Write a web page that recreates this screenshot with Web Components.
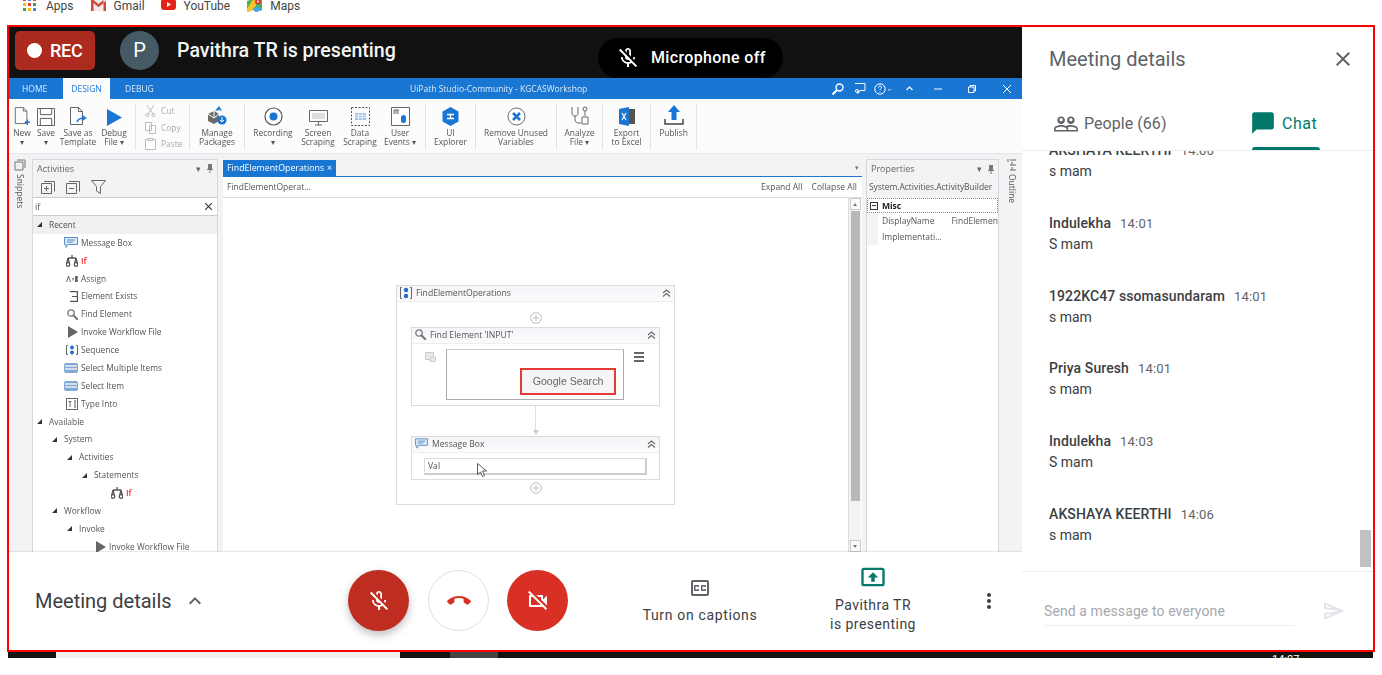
<!DOCTYPE html>
<html lang="en">
<head>
<meta charset="utf-8">
<title>Meet</title>
<style>
html, body { margin: 0; padding: 0; background: #fff; overflow: hidden; }
body { font-family: Roboto, "Liberation Sans", sans-serif; width: 1382px; height: 675px; }
</style>
</head>
<body>
<bookmark-bar></bookmark-bar>
<meet-frame></meet-frame>
<task-strip></task-strip>

<script>
const define = (name, html, init) => customElements.define(name, class extends HTMLElement {
  constructor() {
    super();
    this.attachShadow({ mode: 'open' });
    this.shadowRoot.innerHTML = html;
    if (init) init(this);
  }
});

const mi = (d, size, fill) =>
  `<svg width="${size}" height="${size}" viewBox="0 0 24 24" fill="${fill}"><path d="${d}"/></svg>`;

const ICON = {
  micOff: 'M10.8 4.9c0-.66.54-1.2 1.2-1.2s1.2.54 1.2 1.2l-.01 3.91L15 10.6V5c0-1.66-1.34-3-3-3-1.54 0-2.79 1.16-2.96 2.65l1.76 1.76V4.9zM19 11h-1.7c0 .58-.1 1.13-.27 1.64l1.27 1.27c.44-.88.7-1.87.7-2.91zM4.41 2.86L3 4.27l6 6V11c0 1.66 1.34 3 3 3 .23 0 .44-.03.65-.08l1.66 1.66c-.71.33-1.5.52-2.31.52-2.76 0-5.3-2.1-5.3-5.1H5c0 3.41 2.72 6.23 6 6.72V21h2v-3.28c.91-.13 1.77-.4 2.55-.82l4.18 4.18 1.41-1.41L4.41 2.86z',
  callEnd: 'M12 9c-1.6 0-3.15.25-4.6.72v3.1c0 .39-.23.74-.56.9-.98.49-1.87 1.12-2.66 1.85-.18.18-.43.28-.7.28-.28 0-.53-.11-.71-.29L.29 13.08c-.18-.17-.29-.42-.29-.7 0-.28.11-.53.29-.71C3.34 8.78 7.46 7 12 7s8.66 1.78 11.71 4.67c.18.18.29.43.29.71 0 .28-.11.53-.29.71l-2.48 2.48c-.18.18-.43.29-.71.29-.27 0-.52-.11-.7-.28-.79-.74-1.69-1.36-2.67-1.85-.33-.16-.56-.5-.56-.9v-3.1C15.15 9.25 13.6 9 12 9z',
  camOff: 'M9.56 8l-2-2-4.15-4.14L2 3.27 4.73 6H4c-.55 0-1 .45-1 1v10c0 .55.45 1 1 1h12c.21 0 .39-.08.55-.18L19.73 21l1.41-1.41-8.86-8.86L9.56 8zM5 16V8h1.73l8 8H5zm10-8v2.61l6 6V6.5l-4 4V7c0-.55-.45-1-1-1h-5.61l2 2H15z',
  close: 'M19 6.41L17.59 5 12 10.59 6.41 5 5 6.41 10.59 12 5 17.59 6.41 19 12 13.41 17.59 19 19 17.59 13.41 12z',
  people: 'M16.5 13c-1.2 0-3.07.34-4.5 1-1.43-.67-3.3-1-4.5-1C5.33 13 1 14.08 1 16.25V19h22v-2.75c0-2.17-4.33-3.25-6.5-3.25zm-4 4.5h-10v-1.25c0-.54 2.56-1.75 5-1.75s5 1.21 5 1.75v1.25zm9 0H14v-1.25c0-.46-.2-.86-.52-1.22.88-.3 1.96-.53 3.02-.53 2.44 0 5 1.21 5 1.75v1.25zM7.5 12c1.93 0 3.5-1.57 3.5-3.5S9.43 5 7.5 5 4 6.57 4 8.5 5.57 12 7.5 12zm0-5.5c.83 0 1.5.67 1.5 1.5s-.67 1.5-1.5 1.5S6 8.83 6 8s.67-1.5 1.5-1.5zm9 5.5c1.93 0 3.5-1.57 3.5-3.5S18.43 5 16.5 5 13 6.57 13 8.5s1.57 3.5 3.5 3.5zm0-5.5c.83 0 1.5.67 1.5 1.5s-.67 1.5-1.5 1.5S15 8.83 15 8s.67-1.5 1.5-1.5z',
  chat: 'M20 2H4c-1.1 0-2 .9-2 2v18l4-4h14c1.1 0 2-.9 2-2V4c0-1.1-.9-2-2-2z',
  send: 'M4.01 6.03l7.51 3.22-7.52-1 .01-2.22m7.5 8.72L4 17.97v-2.22l7.51-1M2.01 3L2 10l15 2-15 2 .01 7L23 12 2.01 3z',
  less: 'M12 8l-6 6 1.41 1.41L12 10.83l4.59 4.58L18 14z',
  cc: 'M19 4H5c-1.11 0-2 .9-2 2v12c0 1.1.89 2 2 2h14c1.1 0 2-.9 2-2V6c0-1.1-.9-2-2-2zm0 14H5V6h14v12zM7 15h3c.55 0 1-.45 1-1v-1H9.5v.5h-2v-3h2v.5H11v-1c0-.55-.45-1-1-1H7c-.55 0-1 .45-1 1v4c0 .55.45 1 1 1zm7 0h3c.55 0 1-.45 1-1v-1h-1.5v.5h-2v-3h2v.5H18v-1c0-.55-.45-1-1-1h-3c-.55 0-1 .45-1 1v4c0 .55.45 1 1 1z',
  present: 'M20 4H4c-1.1 0-2 .9-2 2v12c0 1.1.9 2 2 2h16c1.1 0 2-.9 2-2V6c0-1.1-.9-2-2-2zm0 14H4V6h16v12zM12 8l-4.5 4.5H10.5V16h3v-3.5h3z',
  more: 'M12 8c1.1 0 2-.9 2-2s-.9-2-2-2-2 .9-2 2 .9 2 2 2zm0 2c-1.1 0-2 .9-2 2s.9 2 2 2 2-.9 2-2-.9-2-2-2zm0 6c-1.1 0-2 .9-2 2s.9 2 2 2 2-.9 2-2-.9-2-2-2z',
};

/* ---------- chrome bookmarks ---------- */
define('bookmark-bar', `
<style>
:host { display: flex; height: 25px; padding-left: 23px; box-sizing: border-box; overflow: hidden;
  font: 12px/12px Roboto, sans-serif; color: #444; }
.b { display: flex; gap: 8px; height: 12px; align-items: flex-start; }
svg { display: block; margin-top: -2px; }
</style>
<div class="b" style="gap:10px;margin-right:17px"><svg width="13" height="13" viewBox="0 0 13 13">
  <rect x="0" y="0" width="3" height="3" fill="#ea4335"/><rect x="5" y="0" width="3" height="3" fill="#4285f4"/><rect x="10" y="0" width="3" height="3" fill="#ea4335"/>
  <rect x="0" y="5" width="3" height="3" fill="#fbbc05"/><rect x="5" y="5" width="3" height="3" fill="#ea4335"/><rect x="10" y="5" width="3" height="3" fill="#34a853"/>
  <rect x="0" y="10" width="3" height="3" fill="#34a853"/><rect x="5" y="10" width="3" height="3" fill="#fbbc05"/><rect x="10" y="10" width="3" height="3" fill="#4285f4"/></svg><span>Apps</span></div>
<div class="b" style="margin-right:16px"><svg width="15" height="13" viewBox="0 0 15 13"><path d="M0 1h15v12H0z" fill="#eee"/><path d="M0 1l7.500 6L15 1v3L7.500 10 0 4z" fill="#ddd"/><path d="M0 0l2.500 2v11H0zM15 0l-2.500 2v11H15zM0 0l7.500 6L15 0v3L7.500 9 0 3z" fill="#d44638"/></svg><span>Gmail</span></div>
<div class="b" style="margin-right:17px"><svg width="15" height="13" viewBox="0 0 15 13"><rect y="1" width="15" height="11" rx="3" fill="#e62117"/><path d="M6 4l4 2.500L6 9z" fill="#fff"/></svg><span>YouTube</span></div>
<div class="b"><svg width="15" height="14" viewBox="0 0 15 14"><path d="M0 3l6-2 3 2 6-2v11l-6 2-3-2-6 2z" fill="#4caf50"/><path d="M6 1l3 2v5L4 13l-4 1v-3z" fill="#fbc02d"/><path d="M9 8l6 4-6 2-3-2z" fill="#42a5f5"/><circle cx="11" cy="3.500" r="3" fill="#e53935"/><circle cx="11" cy="3.500" r="1" fill="#fff"/></svg><span>Maps</span></div>
`);

/* ---------- outer red frame ---------- */
define('meet-frame', `
<style>
:host { display: flex; margin-left: 7px; width: 1368px; height: 627px; box-sizing: border-box;
  border: 2px solid #f00; background: #fff; }
.main { width: 1013px; flex: none; display: flex; flex-direction: column; position: relative; }
</style>
<div class="main">
  <meet-topbar></meet-topbar>
  <studio-screen></studio-screen>
  <meet-controls></meet-controls>
</div>
<chat-panel></chat-panel>
`);

define('meet-topbar', `
<style>
:host { display: flex; align-items: center; height: 51px; flex: none; background: #111; color: #fff;
  position: relative; padding: 0 0 4px 6px; box-sizing: border-box; }
.rec { width: 80px; height: 39px; border-radius: 5px; background: #ad2a1f; display: flex; align-items: center;
  box-sizing: border-box; padding-left: 12px; gap: 8px; font: 500 18px/39px Roboto, sans-serif; letter-spacing: -.3px; }
.rec i { width: 15px; height: 15px; border-radius: 50%; background: #fff; }
.av { width: 39px; height: 39px; border-radius: 50%; background: #455a64; margin-left: 25px; text-align: center;
  font: 400 20px/39px Roboto, sans-serif; }
.who { margin-left: 18px; font: 500 19.600px/24px Roboto, sans-serif; color: #f4f4f4; }
.toast { position: absolute; left: 589px; top: 11px; width: 185px; height: 40px; border-radius: 20px; background: #000;
  display: flex; align-items: center; box-sizing: border-box; padding-left: 18px; gap: 11px;
  font: 500 16px/20px Roboto, sans-serif; letter-spacing: .35px; }
svg { display: block; }
</style>
<div class="rec"><i></i>REC</div>
<div class="av">P</div>
<div class="who">Pavithra TR is presenting</div>
<div class="toast">${mi(ICON.micOff, 24, '#fff')}<span>Microphone off</span></div>
`);

/* ---------- shared screen: the studio window ---------- */
define('ribbon-item', `
<style>
:host { display: flex; flex-direction: column; align-items: center; flex: none; height: 46px;
  font: 8.400px/9.400px "Open Sans", sans-serif; color: #555; text-align: center; }
.i { height: 22px; display: flex; align-items: flex-end; justify-content: center; flex: none; }
.l { white-space: nowrap; margin-top: 2px; }
</style>
<div class="i"><slot name="icon"></slot></div>
<div class="l"><slot></slot></div>
`, el => { el.style.width = el.getAttribute('w') + 'px'; });

define('studio-ribbon', `
<style>
:host { display: flex; height: 54px; flex: none; background: #fdfcfd; padding: 5px 0 0 2px; box-sizing: border-box; }
.sep { width: 1px; height: 46px; background: #e4e2e6; flex: none; }
.clip { width: 53px; flex: none; box-sizing: border-box; padding: 0 0 0 9px; margin-top: -1px; font: 8.400px/16.500px "Open Sans", sans-serif; color: #aaa; }
.clip div { display: flex; align-items: center; gap: 5px; height: 16.500px; }
svg { display: block; }
</style>
<ribbon-item w="22"><svg slot="icon" width="16" height="20" viewBox="0 0 18 22" fill="none" stroke="#666"><path d="M1.500 1.500h9l4 4v14h-13z"/><path d="M10.500 1.500v4h4"/><path d="M12 18h6M15 15v6" stroke="#1976d2" stroke-width="1.500"/></svg>New<br>▾</ribbon-item>
<ribbon-item w="26"><svg slot="icon" width="18" height="18" viewBox="0 0 19 19" fill="#fff" stroke="#555"><path d="M.5.5h18v18H.5z"/><path d="M3.500 1v6h12V1M3.500 18v-7h12v7"/></svg>Save<br>▾</ribbon-item>
<ribbon-item w="38"><svg slot="icon" width="18" height="20" viewBox="0 0 18 20" fill="none" stroke="#666"><path d="M1.500 1.500h8l4 4v13h-12z"/><path d="M9.500 1.500v4h4"/><path d="M8 16c1-3 3-4 7-4M13 9.500l3.500 2.500-3.500 2.500" stroke="#1976d2" stroke-width="1.500"/></svg>Save as<br>Template</ribbon-item>
<ribbon-item w="34"><svg slot="icon" width="15" height="17" viewBox="0 0 15 17"><path d="M0 0l15 8.500L0 17z" fill="#1976d2"/></svg>Debug<br>File ▾</ribbon-item>
<div class="sep" style="margin-left:4px"></div>
<div class="clip">
  <div><svg width="11" height="12" viewBox="0 0 11 12" fill="none" stroke="#bbb"><path d="M2 0l6 9M9 0L3 9"/><circle cx="2.500" cy="10" r="1.500"/><circle cx="8.500" cy="10" r="1.500"/></svg>Cut</div>
  <div><svg width="11" height="12" viewBox="0 0 11 12" fill="#fff" stroke="#bbb"><path d="M.5.5h6v8h-6zM4.500 3.500h6v8h-6z"/></svg>Copy</div>
  <div><svg width="11" height="12" viewBox="0 0 11 12" fill="#fff" stroke="#bbb"><path d="M.5 1.500h10v10H.5z"/><path d="M3 .5h5v2H3z"/></svg>Paste</div>
</div>
<div class="sep"></div>
<ribbon-item w="54"><svg slot="icon" width="20" height="21" viewBox="0 0 20 21"><path d="M1 9l6-3 5 3v7l-5 3-6-3z" fill="#6b6b6b"/><path d="M7 6v7M1 9l6 4 5-4" stroke="#fff" fill="none"/><path d="M8 6l4-5 3 5-3-1z" fill="#1976d2"/><circle cx="15" cy="15" r="4.500" fill="#1976d2"/><path d="M15 12v5M13 15l2 2 2-2" stroke="#fff" fill="none"/></svg>Manage<br>Packages</ribbon-item>
<div class="sep"></div>
<ribbon-item w="56"><svg slot="icon" width="19" height="19" viewBox="0 0 19 19"><circle cx="9.500" cy="9.500" r="8.500" fill="#fff" stroke="#555" stroke-width="1.200"/><circle cx="9.500" cy="9.500" r="4" fill="#1976d2"/></svg>Recording<br>▾</ribbon-item>
<ribbon-item w="34"><svg slot="icon" width="19" height="16" viewBox="0 0 19 16" fill="none" stroke="#666"><path d="M.5.5h18v11H.5z"/><path d="M3 3h13v6H3z" fill="#ddd" stroke="none"/><path d="M6 15h7M9.500 12v3"/></svg>Screen<br>Scraping</ribbon-item>
<ribbon-item w="50"><svg slot="icon" width="19" height="19" viewBox="0 0 19 19" fill="none"><path d="M.5.5h18v18H.5z" stroke="#555" stroke-dasharray="2 1.500"/><path d="M4 6h11v7H4z" fill="#9ec3ea"/><path d="M4 8.300h11M4 10.600h11M7.500 6v7M11.200 6v7" stroke="#fff" stroke-width=".7"/></svg>Data<br>Scraping</ribbon-item>
<ribbon-item w="30"><svg slot="icon" width="19" height="19" viewBox="0 0 19 19"><path d="M.5.5h18v18H.5z" fill="#fff" stroke="#666"/><path d="M3 3v4M5 3v4M7 3v4M3 3h5" stroke="#666" fill="none"/><rect x="10" y="8" width="5" height="8" rx="2.500" fill="#1976d2"/></svg>User<br>Events ▾</ribbon-item>
<div class="sep" style="margin-left:10px"></div>
<ribbon-item w="49"><svg slot="icon" width="17" height="19" viewBox="0 0 17 19"><path d="M8.500 0l8 4.500v10l-8 4.500-8-4.500v-10z" fill="#1976d2"/><path d="M5 7.500h7M5 11.500h7M8.500 7.500v4" stroke="#fff" fill="none" stroke-width="1.300"/></svg>UI<br>Explorer</ribbon-item>
<div class="sep"></div>
<ribbon-item w="80"><svg slot="icon" width="19" height="19" viewBox="0 0 19 19"><circle cx="9.500" cy="9.500" r="8.500" fill="#fff" stroke="#666"/><path d="M6 6l7 7M13 6l-7 7" stroke="#1976d2" stroke-width="2.500"/></svg>Remove Unused<br>Variables</ribbon-item>
<div class="sep"></div>
<ribbon-item w="45"><svg slot="icon" width="18" height="20" viewBox="0 0 18 20" fill="none" stroke="#666"><path d="M1 1v6c0 2 1 3 3 3s3-1 3-3V1M4 10v4c0 2 2 3 4 3h2"/><circle cx="14" cy="3" r="2"/><path d="M14 5v5"/><path d="M11 11h6v7h-6z"/></svg>Analyze<br>File ▾</ribbon-item>
<div class="sep"></div>
<ribbon-item w="47"><svg slot="icon" width="16" height="19" viewBox="0 0 16 19"><path d="M8 2h8v15H8z" fill="#555"/><path d="M0 2l10-2v19L0 17z" fill="#1976d2"/><path d="M3 6l4 7M7 6l-4 7" stroke="#fff" stroke-width="1.200"/></svg>Export<br>to Excel</ribbon-item>
<div class="sep"></div>
<ribbon-item w="45"><svg slot="icon" width="20" height="21" viewBox="0 0 20 21"><path d="M10 0l6 7h-3.500v8h-5V7H4z" fill="#1976d2"/><path d="M1 14v5h18v-5" stroke="#444" fill="none" stroke-width="1.500"/></svg>Publish<br>&nbsp;</ribbon-item>
<div class="sep"></div>
`);

define('tree-row', `
<style>
:host { display: flex; align-items: center; height: 17.890px; font: 8.400px/12px "Open Sans", sans-serif; color: #555; white-space: nowrap; }
:host([head]) { background: #f0eff1; }
.a { width: 9px; flex: none; display: flex; }
.a i { display: block; width: 0; height: 0; border-style: solid; border-width: 0 0 5px 5px; border-color: transparent transparent #333 transparent; }
.ic { display: flex; justify-content: flex-end; margin-right: 3px; }
</style>
<span class="a"><i></i></span><span class="ic"><slot name="icon"></slot></span><slot></slot>
`, el => {
  el.style.paddingLeft = el.getAttribute('x') + 'px';
  if (el.hasAttribute('leaf')) {
    el.shadowRoot.querySelector('.a').style.display = 'none';
    el.shadowRoot.querySelector('.ic').style.width = el.getAttribute('leaf') + 'px';
  }
  if (el.hasAttribute('red')) { el.style.color = '#f02a2a'; el.style.fontWeight = '600'; }
});

const ifIcon = `<svg slot="icon" width="12" height="12" viewBox="0 0 12 12" fill="none" stroke="#555" stroke-width="1.300"><path d="M6 0v3M2 3h8M2 3L.8 8M2 3l1.300 5M10 3L8.800 8M10 3l1.300 5"/><circle cx="2" cy="9.500" r="1.800"/><circle cx="10" cy="9.500" r="1.800"/></svg>`;
const itemsIcon = `<svg slot="icon" width="14" height="10" viewBox="0 0 14 10"><rect width="14" height="10" rx="2" fill="#7fa9d6"/><path d="M1 3h12M1 6h12" stroke="#eee" stroke-width="1.500"/></svg>`;
const playIcon = `<svg slot="icon" width="10" height="12" viewBox="0 0 10 12"><path d="M0 0l10 6-10 6z" fill="#666"/></svg>`;

define('activities-panel', `
<style>
:host { display: flex; flex-direction: column; width: 186px; flex: none; margin: 5px 0 0 1px; background: #f3f2f5;
  border: 1px solid #d9d8dc; border-bottom: 0; box-sizing: border-box; min-height: 0; }
.h { height: 17px; display: flex; align-items: center; padding: 0 4px; font: 9px/12px "Open Sans", sans-serif; color: #666; gap: 6px; flex: none; }
.dots { flex: 1; height: 4px; background-image: radial-gradient(#bbb 35%, transparent 40%); background-size: 2px 2px; }
.tools { height: 20px; display: flex; align-items: center; gap: 11px; padding-left: 8px; flex: none; }
.search { height: 17px; background: #fff; display: flex; align-items: center; justify-content: space-between;
  padding: 0 5px 0 2px; font: 9px/12px "Open Sans", sans-serif; color: #555; flex: none; border-top: 1px solid #ccc; border-bottom: 1px solid #ccc; }
.list { background: #fff; flex: 1; overflow: hidden; }
svg { display: block; }
</style>
<div class="h"><span>Activities</span><span class="dots"></span><span>▾</span><svg width="6" height="9" viewBox="0 0 6 9" fill="#777"><path d="M1 0h4v5H1zM0 5h6v1H0zM2.500 6h1v3h-1z"/></svg></div>
<div class="tools">
  <svg width="14" height="13" viewBox="0 0 14 13" fill="none" stroke="#666"><path d="M.5 2.500h10v10H.5zM3 .5h10.500v10"/><path d="M3 7.500h5M5.500 5v5"/></svg>
  <svg width="14" height="13" viewBox="0 0 14 13" fill="none" stroke="#666"><path d="M.5 2.500h10v10H.5zM3 .5h10.500v10"/><path d="M3 7.500h5"/></svg>
  <svg width="15" height="14" viewBox="0 0 15 14" fill="none" stroke="#666"><path d="M.5.5h14l-5 6v7l-4-2.500V6.500z"/></svg>
</div>
<div class="search"><span>if</span><svg width="7" height="7" viewBox="0 0 7 7" stroke="#333" stroke-width="1.100"><path d="M0 0l7 7M7 0L0 7"/></svg></div>
<div class="list">
  <tree-row x="4" head>Recent</tree-row>
  <tree-row x="30" leaf="15"><svg slot="icon" width="14" height="11" viewBox="0 0 14 11"><path d="M.5.5h13v7H4l-2 3v-3H.5z" fill="#dce9f6" stroke="#5b8fc7"/><path d="M3 3h8M3 5h6" stroke="#5b8fc7"/></svg>Message Box</tree-row>
  <tree-row x="30" leaf="15" red>${ifIcon}If</tree-row>
  <tree-row x="30" leaf="15"><svg slot="icon" width="12" height="6" viewBox="0 0 12 6" fill="#666"><path d="M0 6l2-6h1l2 6H4L2.500 1.500 1 6zM6 2h2v.8H6zM6 3.500h2v.8H6zM9 0h2c1.300 0 1.300 2.600 0 3 1.500.3 1.500 3-.2 3H9z"/></svg>Assign</tree-row>
  <tree-row x="30" leaf="15"><svg slot="icon" width="8" height="11" viewBox="0 0 8 11" fill="none" stroke="#555" stroke-width="1.200"><path d="M0 .6h7.400v9.800H0M2 5.500h5.400"/></svg>Element Exists</tree-row>
  <tree-row x="30" leaf="15"><svg slot="icon" width="11" height="11" viewBox="0 0 11 11" fill="none" stroke="#777" stroke-width="1.300"><circle cx="4" cy="4" r="3.200"/><path d="M6.500 6.500L11 11" stroke-width="2"/></svg>Find Element</tree-row>
  <tree-row x="30" leaf="15">${playIcon}Invoke Workflow File</tree-row>
  <tree-row x="30" leaf="15"><svg slot="icon" width="12" height="10" viewBox="0 0 12 10"><path d="M2 .5H.5v9H2M10 .5h1.500v9H10" fill="none" stroke="#666"/><circle cx="6" cy="2.500" r="2" fill="#1f6fc4"/><circle cx="6" cy="7.500" r="2" fill="#1f6fc4"/></svg>Sequence</tree-row>
  <tree-row x="30" leaf="15">${itemsIcon}Select Multiple Items</tree-row>
  <tree-row x="30" leaf="15">${itemsIcon}Select Item</tree-row>
  <tree-row x="30" leaf="15"><svg slot="icon" width="12" height="12" viewBox="0 0 12 12" fill="none" stroke="#666"><path d="M.5.5h11v11H.5z"/><path d="M2.500 3.500h3M4 3.500V9M8 3h2M9 3v6M8 9h2"/></svg>Type Into</tree-row>
  <tree-row x="4">Available</tree-row>
  <tree-row x="19">System</tree-row>
  <tree-row x="34">Activities</tree-row>
  <tree-row x="49">Statements</tree-row>
  <tree-row x="75" leaf="15" red>${ifIcon}If</tree-row>
  <tree-row x="19">Workflow</tree-row>
  <tree-row x="34">Invoke</tree-row>
  <tree-row x="63" leaf="10">${playIcon}Invoke Workflow File</tree-row>
</div>
`);

define('wf-card', `
<style>
:host { display: block; background: #fff; border: 1px solid #dcdcdf; box-sizing: border-box; }
.h { height: 16px; box-sizing: border-box; display: flex; align-items: center; gap: 4px; padding: 0 3px 2px; background: linear-gradient(#f6f4f8, #fbfafc);
  font: 8.600px/12px "Open Sans", sans-serif; color: #555; border-bottom: 1px solid #eee; }
.t { flex: 1; }
svg { display: block; }
</style>
<div class="h"><slot name="icon"></slot><span class="t"></span><svg width="9" height="8" viewBox="0 0 9 8" fill="none" stroke="#666" stroke-width="1.100"><path d="M1 4l3.500-3L8 4M1 7.500l3.500-3 3.500 3"/></svg></div>
<slot></slot>
`, el => { el.shadowRoot.querySelector('.t').textContent = el.getAttribute('title'); el.removeAttribute('title'); });

const plusSign = `<svg width="12" height="12" viewBox="0 0 12 12" fill="#fff" stroke="#bbb"><circle cx="6" cy="6" r="5.300"/><path d="M3 6h6M6 3v6"/></svg>`;

define('workflow-designer', `
<style>
:host { display: flex; flex-direction: column; flex: none; width: 639px; margin: 6px 0 0 5px; min-height: 0; }
.tabs { height: 16px; flex: none; display: flex; align-items: stretch; justify-content: space-between; border-bottom: 1px solid #1976d2; }
.tab { width: 113px; background: #1976d2; color: #fff; display: flex; align-items: center; justify-content: space-between;
  padding: 0 4px; box-sizing: border-box; font: 8.800px/12px "Open Sans", sans-serif; }
.arrow { font-size: 7px; color: #777; padding-right: 3px; line-height: 16px; }
.crumbs { height: 21px; flex: none; background: #fff; border-bottom: 1px solid #ddd; display: flex; align-items: center; justify-content: space-between;
  padding: 0 5px 0 4px; box-sizing: border-box; font: 8.500px/12px "Open Sans", sans-serif; color: #555; }
.crumbs b { font-weight: 400; margin-left: 7px; }
.body { flex: 1; display: flex; background: #fff; min-height: 0; overflow: hidden; }
.canvas { flex: 1; display: flex; justify-content: center; align-items: flex-start; padding-top: 87px; box-sizing: border-box; position: relative; }
.seq { width: 279px; height: 220px; flex: none; }
.pad { padding: 10px 14px 0; display: flex; flex-direction: column; align-items: center; }
.pad wf-card { width: 100%; }
.find { height: 79px; }
.fbody { display: flex; padding: 5px 0 0 13px; height: 52px; box-sizing: content-box; }
.doc { width: 11px; height: 10px; margin: 3px 10px 0 0; flex: none; }
.shot { width: 178px; height: 51px; border: 1px solid #aaa; border-top-color: #ccc; box-sizing: border-box; display: flex; justify-content: flex-end; padding: 18px 7px 0 0; flex: none; }
.gs { width: 96px; height: 27px; border: 2px solid #e53935; box-sizing: border-box; text-align: center; font: 10.600px/23px "Liberation Sans", sans-serif; color: #666; background: #f4f4f4; }
.ham { width: 10px; height: 10px; margin: 3px 0 0 10px; background: linear-gradient(#666 2px, transparent 2px, transparent 4px, #666 4px, #666 6px, transparent 6px, transparent 8px, #666 8px); }
.line { width: 1px; height: 24px; background: #ddd; }
.tip { width: 0; height: 0; border: 3px solid transparent; border-top: 5px solid #ccc; border-bottom: 0; margin-bottom: 1px; }
.msg { height: 44px; }
.mbody { padding: 5px 12px 0; }
.inp { height: 17px; border: 1px solid #ddd; border-right: 2px solid #ccc; border-bottom: 2px solid #ccc; box-sizing: border-box; font: 8.600px/15px "Open Sans", sans-serif; color: #555; padding-left: 3px; }
.cursor { position: absolute; left: 254px; top: 265px; }
.sb { width: 13px; flex: none; background: #f3f3f3; border-left: 1px solid #ddd; box-sizing: border-box; display: flex; flex-direction: column; align-items: center; margin-right: 1px; }
.btn { width: 11px; height: 12px; background: #fbfbfb; border: 1px solid #ccc; box-sizing: border-box; flex: none; display: flex; align-items: center; justify-content: center; }
.btn i { width: 0; height: 0; border: 2.500px solid transparent; border-bottom: 3px solid #777; border-top: 0; }
.thumb { width: 9px; height: 290px; background: #b8b8b8; margin-top: 1px; flex: none; }
.end { margin-top: auto; }
.end i { border-top: 3px solid #777; border-bottom: 0; }
svg { display: block; }
</style>
<div class="tabs"><div class="tab"><span>FindElementOperations</span><span>×</span></div><span class="arrow">▾</span></div>
<div class="crumbs"><span>FindElementOperat...</span><span>Expand All <b>Collapse All</b></span></div>
<div class="body">
  <div class="canvas">
    <wf-card class="seq" title="FindElementOperations">
      <svg slot="icon" width="12" height="12" viewBox="0 0 12 12"><path d="M2 .5H.5v11H2M10 .5h1.500v11H10" fill="none" stroke="#666"/><circle cx="6" cy="3" r="2.200" fill="#1f6fc4"/><circle cx="6" cy="9" r="2.200" fill="#1f6fc4"/></svg>
      <div class="pad">
        ${plusSign}
        <wf-card class="find" title="Find Element 'INPUT'" style="margin-top:3px">
          <svg slot="icon" width="11" height="11" viewBox="0 0 11 11" fill="none" stroke="#777" stroke-width="1.300"><circle cx="4" cy="4" r="3.200"/><path d="M6.500 6.500L11 11" stroke-width="2"/></svg>
          <div class="fbody">
            <svg class="doc" viewBox="0 0 11 10" fill="#e9e9ec" stroke="#ccc"><path d="M.5.5h8v7h-8z"/><path d="M5 5h5.500v4.500H5z"/></svg>
            <div class="shot"><div class="gs">Google Search</div></div>
            <div class="ham"></div>
          </div>
        </wf-card>
        <div class="line"></div><div class="tip"></div>
        <wf-card class="msg" title="Message Box">
          <svg slot="icon" width="13" height="11" viewBox="0 0 14 11"><path d="M.5.5h13v7H4l-2 3v-3H.5z" fill="#dce9f6" stroke="#5b8fc7"/><path d="M3 3h8M3 5h6" stroke="#5b8fc7"/></svg>
          <div class="mbody"><div class="inp">Val</div></div>
        </wf-card>
        <div style="margin-top:2px">${plusSign}</div>
      </div>
    </wf-card>
    <svg class="cursor" width="10" height="15" viewBox="0 0 10 15"><path d="M.5.5v11l3-2.500 2 4.500 2-1-2-4.500h4z" fill="#fff" stroke="#333" stroke-width=".8"/></svg>
  </div>
  <div class="sb"><div class="btn"><i></i></div><div class="thumb"></div><div class="btn end"><i></i></div></div>
</div>
`);

define('properties-panel', `
<style>
:host { display: flex; flex-direction: column; width: 133px; flex: none; margin: 5px 0 0 4px; background: #fff; box-sizing: border-box;
  border: 1px solid #d9d8dc; border-bottom: 0; font: 8.500px/12px "Open Sans", sans-serif; color: #555; }
.h { height: 18px; flex: none; background: #f3f2f5; display: flex; align-items: center; padding: 0 4px; gap: 6px; font-size: 9px; color: #666; }
.dots { flex: 1; height: 4px; background-image: radial-gradient(#bbb 35%, transparent 40%); background-size: 2px 2px; }
.s { height: 20px; flex: none; background: #f3f2f5; display: flex; align-items: center; padding: 0 0 2px 2px; box-sizing: border-box; white-space: nowrap; overflow: hidden; letter-spacing: -.05px; }
.m { height: 15px; display: flex; align-items: center; gap: 4px; border: 1px dotted #888; box-sizing: border-box; color: #222; font-weight: 700; padding-left: 2px; flex: none; }
.m i { width: 6px; height: 6px; border: 1px solid #333; display: block; background: linear-gradient(#333,#333) center/4px 1px no-repeat; }
.r { display: flex; height: 16px; align-items: center; white-space: nowrap; overflow: hidden; padding-left: 15px; flex: none;
  background: linear-gradient(90deg, #f3f2f5 11px, transparent 11px); }
.r b { font-weight: 400; margin-left: 17px; }
</style>
<div class="h"><span>Properties</span><span class="dots"></span><span>▾</span><svg width="6" height="9" viewBox="0 0 6 9" fill="#777"><path d="M1 0h4v5H1zM0 5h6v1H0zM2.500 6h1v3h-1z"/></svg></div>
<div class="s">System.Activities.ActivityBuilder</div>
<div class="m"><i></i>Misc</div>
<div class="r">DisplayName<b>FindElemen</b></div>
<div class="r">Implementati...</div>
`);

define('side-tab', `
<style>
:host { display: flex; flex-direction: column; align-items: center; flex: none; background: #f3f2f5; padding-top: 5px; gap: 3px;
  font: 8.500px/12px "Open Sans", sans-serif; color: #555; }
span { writing-mode: vertical-rl; }
</style>
<slot name="icon"></slot><span><slot></slot></span>
`);

define('studio-screen', `
<style>
:host { display: flex; flex-direction: column; height: 474px; flex: none; background: #f3f2f5; overflow: hidden; filter: blur(.35px); }
.title { height: 21px; flex: none; background: #1976d2; color: #dcebfa; display: flex; align-items: stretch;
  font: 8.500px/21px "Open Sans", sans-serif; }
.tabs { display: flex; width: 401px; flex: none; padding-left: 13px; box-sizing: border-box; }
.home { width: 41px; }
.on { width: 47px; background: #fdfcfd; color: #1976d2; text-align: center; }
.dbg { margin-left: 15px; }
.name { width: 380px; flex: none; }
.ctl { flex: 1; display: flex; align-items: center; margin-left: 42px; }
.ctl svg { display: block; flex: none; }
.body { flex: 1; display: flex; min-height: 0; border-top: 1px solid #e5e4e8; }
</style>
<div class="title">
  <div class="tabs"><span class="home">HOME</span><span class="on">DESIGN</span><span class="dbg">DEBUG</span></div>
  <div class="name">UiPath Studio-Community - KGCASWorkshop</div>
  <div class="ctl">
    <svg width="12" height="12" viewBox="0 0 12 12" fill="none" stroke="#fff" stroke-width="1.400"><circle cx="7.500" cy="4.500" r="3.500"/><path d="M5 7L.5 11.500" stroke-width="2"/></svg>
    <svg style="margin-left:10px" width="12" height="12" viewBox="0 0 12 12" fill="none" stroke="#fff"><path d="M1 .5h10v7H6l-2 3V7.500"/><circle cx="3" cy="8" r="1.500"/></svg>
    <svg style="margin-left:8px" width="17" height="12" viewBox="0 0 17 12" fill="none" stroke="#fff"><circle cx="6" cy="6" r="5.200"/><path d="M4.500 4.500c0-2 3-2 3 0 0 1-1.500 1-1.500 2.500M6 8.500v1"/><path d="M14 6l1.500 1.500L17 6" stroke-width=".8"/></svg>
    <svg style="margin-left:15px" width="7" height="5" viewBox="0 0 7 5" fill="none" stroke="#fff" stroke-width="1.200"><path d="M.5 4L3.500 1l3 3"/></svg>
    <svg style="margin-left:21px" width="8" height="2" viewBox="0 0 8 2"><path d="M0 1h8" stroke="#fff"/></svg>
    <svg style="margin-left:26px" width="8" height="8" viewBox="0 0 8 8" fill="none" stroke="#fff"><path d="M.5 2h5.500v5.500H.5zM2 2V.5h5.500V6H6"/></svg>
    <svg style="margin-left:27px" width="8" height="8" viewBox="0 0 8 8" stroke="#fff"><path d="M0 0l8 8M8 0L0 8"/></svg>
  </div>
</div>
<studio-ribbon></studio-ribbon>
<div class="body">
  <side-tab style="width:22px"><svg slot="icon" width="12" height="12" viewBox="0 0 12 12" fill="#eee" stroke="#777"><path d="M1 3h8v8H1zM3 1h8v8"/></svg>Snippets</side-tab>
  <activities-panel></activities-panel>
  <workflow-designer></workflow-designer>
  <properties-panel></properties-panel>
  <side-tab style="width:19px;margin-left:3px"><svg slot="icon" width="10" height="12" viewBox="0 0 10 12" stroke="#666" fill="none"><path d="M1 0v3M3 1h6M5 3v3M3 6h6M5 8v3M3 11h6"/></svg>Outline</side-tab>
</div>
`);

/* ---------- meet controls ---------- */
define('round-btn', `
<style>
:host { display: flex; align-items: center; justify-content: center; width: 61px; height: 61px; border-radius: 50%; flex: none; box-sizing: border-box; }
:host([kind=mic]) { background: #bf2c20; box-shadow: 0 4px 8px rgba(0,0,0,.25); }
:host([kind=end]) { background: #fff; border: 1px solid #e0e0e0; margin: 0 18px 0 19px; }
:host([kind=cam]) { background: #d93025; }
</style>
<slot></slot>
`);

define('meet-controls', `
<style>
:host { display: flex; align-items: center; height: 98px; flex: none; background: #fff; position: relative; box-shadow: 0 -1px 1px rgba(0,0,0,.08); }
.details { width: 339px; flex: none; display: flex; align-items: center; box-sizing: border-box; padding: 0 0 1px 26px;
  font: 400 20px/24px Roboto, sans-serif; color: #3c4043; gap: 11px; }
.btns { display: flex; margin-top: -1px; }
.act { display: flex; flex-direction: column; align-items: center; font: 400 14px/19px Roboto, sans-serif; color: #3c4043; letter-spacing: .65px; text-align: center; flex: none; }
.cap { width: 134px; margin-left: 65px; gap: 6px; margin-top: -1px; }
.pres { width: 120px; margin-left: 46px; margin-top: -5px; gap: 5px; letter-spacing: .45px; }
.dots { margin-left: 44px; margin-top: -1px; }
svg { display: block; }
</style>
<div class="details"><span>Meeting details</span>${mi(ICON.less, 24, '#5f6368')}</div>
<div class="btns">
  <round-btn kind="mic">${mi(ICON.micOff, 24, '#fff')}</round-btn>
  <round-btn kind="end">${mi(ICON.callEnd, 24, '#d93025')}</round-btn>
  <round-btn kind="cam">${mi(ICON.camOff, 24, '#fff')}</round-btn>
</div>
<div class="act cap">${mi(ICON.cc, 24, '#5f6368')}<span>Turn on captions</span></div>
<div class="act pres">${mi(ICON.present, 28, '#00796b')}<span>Pavithra TR<br>is presenting</span></div>
<div class="dots">${mi(ICON.more, 24, '#3c4043')}</div>
`);

/* ---------- chat ---------- */
define('chat-message', `
<style>
:host { display: block; height: 72.800px; box-sizing: border-box; padding-top: 7px; font: 14px/21px Roboto, sans-serif; color: #3c4043; }
.n { font-weight: 500; letter-spacing: .1px; white-space: nowrap; }
.t { font-weight: 400; font-size: 13px; color: #5f6368; margin-left: 9px; letter-spacing: .2px; }
</style>
<div><span class="n"></span><span class="t"></span></div>
<div><slot></slot></div>
`, el => {
  el.shadowRoot.querySelector('.n').textContent = el.getAttribute('name');
  el.shadowRoot.querySelector('.t').textContent = el.getAttribute('time');
});

define('chat-panel', `
<style>
:host { display: flex; flex-direction: column; flex: 1; min-width: 0; background: #fff; position: relative; }
.head { height: 73px; flex: none; display: flex; align-items: flex-start; justify-content: space-between; padding: 20px 18px 0 27px; box-sizing: border-box;
  font: 400 20px/24px Roboto, sans-serif; color: #5f6368; }
.tabs { height: 50px; flex: none; display: flex; border-bottom: 1px solid #eee; box-sizing: content-box; position: relative; }
.tab { display: flex; align-items: center; gap: 6px; font: 400 16px/20px Roboto, sans-serif; color: #5f6368; height: 47px; }
.people { margin-left: 31px; width: 199px; flex: none; letter-spacing: .05px; gap: 5px; }
.chat { color: #00796b; width: 68px; position: relative; height: 50px; align-items: flex-start; padding-top: 10px; box-sizing: border-box; letter-spacing: .55px; }
.chat svg { margin-left: -2px; }
.chat span { margin-top: 4px; }
.chat::after { content: ""; position: absolute; left: 0; right: 0; bottom: 0; height: 3px; background: #00796b; border-radius: 3px 3px 0 0; }
.list { flex: 1; overflow: hidden; padding-left: 27px; min-height: 0; position: relative; }
.inner { margin-top: -18px; }
.thumb { position: absolute; right: 2px; top: 379px; width: 11px; height: 37px; background: #c1c1c1; }
.foot { height: 79px; flex: none; border-top: 1px solid #eee; display: flex; align-items: flex-start; box-sizing: border-box; padding: 28px 0 0 22px; }
.inp { width: 251px; height: 25px; border-bottom: 1px solid #eee; font: 14px/22px Roboto, sans-serif; color: #a5a9ae; flex: none; letter-spacing: .1px; }
.snd { margin-left: 27px; margin-top: -1px; }
svg { display: block; }
</style>
<div class="head"><span>Meeting details</span>${mi(ICON.close, 24, '#5f6368')}</div>
<div class="tabs">
  <div class="tab people">${mi(ICON.people, 26, '#5f6368')}<span>People (66)</span></div>
  <div class="tab chat">${mi(ICON.chat, 26, '#00796b')}<span>Chat</span></div>
</div>
<div class="list">
  <div class="inner">
    <chat-message name="AKSHAYA KEERTHI" time="14:06">s mam</chat-message>
    <chat-message name="Indulekha" time="14:01">S mam</chat-message>
    <chat-message name="1922KC47 ssomasundaram" time="14:01">s mam</chat-message>
    <chat-message name="Priya Suresh" time="14:01">s mam</chat-message>
    <chat-message name="Indulekha" time="14:03">S mam</chat-message>
    <chat-message name="AKSHAYA KEERTHI" time="14:06">s mam</chat-message>
  </div>
  <div class="thumb"></div>
</div>
<div class="foot">
  <div class="inp">Send a message to everyone</div>
  <div class="snd">${mi(ICON.send, 24, '#e3e5e9')}</div>
</div>
`);

/* ---------- what shows below the frame ---------- */
define('task-strip', `
<style>
:host { display: flex; margin-left: 8px; width: 1365px; height: 6px; overflow: hidden; background: #14140f; color: #fff; font: 11px/11px Roboto, sans-serif; }
.w { width: 344px; margin-left: 48px; background: #f1f1f1; flex: none; }
.g { width: 48px; margin-left: 50px; background: #45453f; flex: none; }
.t { margin-left: 774px; padding-top: 2px; white-space: nowrap; }
</style>
<div class="w"></div><div class="g"></div><div class="t">14:07</div>
`);
</script>
</body>
</html>
